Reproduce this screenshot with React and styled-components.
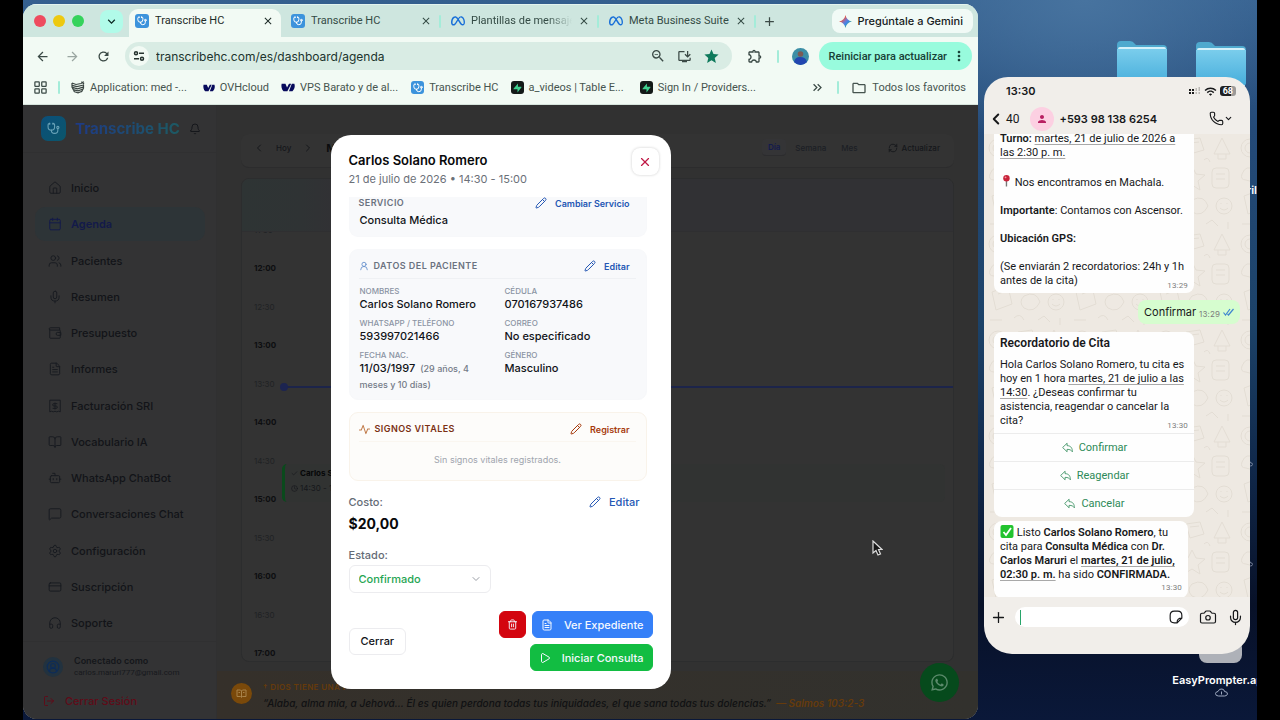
import React from "react";
import styled, { createGlobalStyle, css } from "styled-components";
import {
  Bell, BookOpen, Bot, Calendar, Camera, ChevronDown, ChevronLeft, ChevronRight,
  CircleUserRound, Clock, CreditCard, FileText, Headphones, House, LayoutGrid, LogOut,
  MessageSquare, Mic, Pencil, Phone, Play, Plus, RefreshCw, Settings,
  Stethoscope, Trash2, UserRound, Users, X, Check,
} from "lucide-react";
import {
  MdArrowBack, MdArrowForward, MdClose, MdKeyboardArrowDown, MdKeyboardDoubleArrowRight,
  MdMoreVert, MdOutlineExtension, MdOutlineFolder, MdOutlineInstallDesktop, MdRefresh,
  MdStar, MdZoomOut, MdAdd, MdPerson, MdWifi,
} from "react-icons/md";
import { IoArrowUndoOutline } from "react-icons/io5";
import { FaMeta, FaWhatsapp } from "react-icons/fa6";

const GlobalStyle = createGlobalStyle`
  *, *::before, *::after { box-sizing: border-box; }
  body { margin: 0; background: #000; font-family: Inter, "Liberation Sans", sans-serif; font-size: 11px; }
  button, input, select { font: inherit; color: inherit; margin: 0; padding: 0; border: 0; background: none; }
  button { cursor: pointer; }
  a { color: inherit; text-decoration: none; }
  h1, h2, h3, p, dl, dd, ul { margin: 0; padding: 0; }
  ul { list-style: none; }
  svg { display: block; flex: none; }
`;

/* ---------- Desktop ---------- */
const Screen = styled.div`
  min-height: 100vh;
  padding: 0 23px;
  display: flex;
`;
const Desktop = styled.main`
  position: relative;
  flex: 1;
  min-width: 0;
  height: 100vh;
  min-height: 700px;
  display: flex;
  align-items: flex-start;
  gap: 6px;
  padding: 4px 7px 0 0;
  overflow: hidden;
  background:
    radial-gradient(ellipse 240px 150px at 86% 0, #47739f 0%, transparent 100%),
    linear-gradient(180deg, #35608f 0, #244a78 18%, #1c4268 45%, #10284a 65%, #081128 84%, #0a1839 100%);
`;
const DesktopItem = styled.div`
  position: absolute;
  right: ${(p) => p.$right}px;
  top: ${(p) => p.$top}px;
`;
const FileLabel = styled.div`
  position: absolute;
  right: ${(p) => p.$right}px;
  top: ${(p) => p.$top}px;
  display: grid;
  justify-items: center;
  gap: 1px;
  color: #fff;
  font-size: 11px;
  line-height: 14px;
  font-weight: 600;
  white-space: nowrap;
`;

/* ---------- Browser window ---------- */
const Browser = styled.section`
  flex: 1;
  min-width: 0;
  height: calc(100% - 1px);
  display: flex;
  flex-direction: column;
  border-radius: 14px;
  overflow: hidden;
  background: #f2faf4;
  color: #2f3f3a;
  font-family: Roboto, Inter, sans-serif;
`;
const TabStrip = styled.div`
  height: 33px;
  display: flex;
  align-items: center;
  padding: 0 5px 0 11px;
  background: #cee6df;
  border-top: 1px solid #e3f3ee;
`;
const Lights = styled.div`
  display: flex;
  gap: 7px;
`;
const Light = styled.i`
  width: 12px;
  height: 12px;
  border-radius: 50%;
  background: ${(p) => p.$color};
`;
const TabMenu = styled.button`
  width: 23px;
  height: 23px;
  margin: 0 6px 0 16px;
  display: grid;
  place-items: center;
  border-radius: 8px;
  background: #b1fbe9;
  color: #0c2b24;
`;
const Tab = styled.button`
  width: ${(p) => p.$width}px;
  align-self: flex-end;
  height: 28px;
  display: flex;
  align-items: center;
  gap: 6px;
  padding: 0 7px 5px ${(p) => (p.$active ? 6 : 10)}px;
  text-align: left;
  color: #344b45;
  border-radius: 9px 9px 0 0;
  ${(p) => p.$active && css`background: #f2faf4; color: #1d2b27;`}
`;
const TabTitle = styled.span`
  flex: 1;
  min-width: 0;
  overflow: hidden;
  white-space: nowrap;
  ${(p) => p.$fade && css`mask-image: linear-gradient(90deg, #000 75%, transparent 100%);`}
`;
const Divider = styled.i`
  width: 2px;
  height: 13px;
  flex: none;
  margin: 0 ${(p) => p.$space || 0}px;
  border-radius: 1px;
  background: #a4ecd9;
`;
const GeminiButton = styled.button`
  height: 24px;
  margin-left: auto;
  display: flex;
  align-items: center;
  gap: 5px;
  padding: 0 10px 0 7px;
  border-radius: 8px;
  background: #f1faf6;
  color: #15201d;
  font-family: Inter, sans-serif;
  font-weight: 500;
`;
const Toolbar = styled.div`
  height: 36px;
  display: flex;
  align-items: center;
  padding: 2px 6px 0 11px;
`;
const IconButton = styled.button`
  width: ${(p) => p.$w || 30}px;
  height: 24px;
  flex: none;
  display: grid;
  place-items: center;
  color: ${(p) => p.$color || "#3b4a46"};
`;
const Address = styled.div`
  flex: 1;
  min-width: 0;
  height: 28px;
  margin: 0 9px 0 13px;
  padding: 0 10px 0 4px;
  display: flex;
  align-items: center;
  gap: 7px;
  border-radius: 14px;
  background: #d9ece4;
  input { flex: 1; min-width: 0; font-family: Inter, sans-serif; font-size: 12px; color: #20332d; outline: 0; }
`;
const SiteInfo = styled.button`
  width: 20px;
  height: 20px;
  display: grid;
  place-items: center;
  border-radius: 50%;
  background: #f2faf4;
`;
const Avatar = styled.svg`
  margin: 0 10px 0 5px;
`;
const UpdateButton = styled.button`
  height: 28px;
  display: flex;
  align-items: center;
  gap: 4px;
  padding: 0 5px 0 10px;
  border-radius: 14px;
  background: #98fbdd;
  color: #174036;
  font-weight: 500;
`;
const Bookmarks = styled.nav`
  height: 32px;
  display: flex;
  align-items: center;
  padding: 0 12px 2px 10px;
  border-bottom: 1px solid #d6e4dc;
  white-space: nowrap;
`;
const Bookmark = styled.a`
  display: flex;
  align-items: center;
  gap: 5px;
  margin-left: ${(p) => p.$gap}px;
  color: #46544f;
`;
const Spacer = styled.i`
  flex: 1;
`;
const AppIcon = styled.span`
  width: ${(p) => p.$size || 13}px;
  height: ${(p) => p.$size || 13}px;
  display: grid;
  place-items: center;
  flex: none;
  border-radius: 3px;
  background: ${(p) => p.$bg || "#3c93dc"};
  color: #fff;
`;

/* ---------- Dimmed application page ---------- */
const Page = styled.div`
  position: relative;
  flex: 1;
  min-height: 0;
  display: flex;
  background: #313131;
  color: #15171b;
  font-family: Inter, "Liberation Sans", sans-serif;
`;
const Sidebar = styled.aside`
  width: 194px;
  display: flex;
  flex-direction: column;
  background: #333334;
  border-right: 1px solid #303031;
`;
const Brand = styled.div`
  height: 48px;
  display: flex;
  align-items: center;
  gap: 9px;
  padding: 0 0 0 18px;
  border-bottom: 1px solid #303031;
`;
const BrandMark = styled.span`
  width: 25px;
  height: 25px;
  display: grid;
  place-items: center;
  border-radius: 7px;
  background: linear-gradient(135deg, #0b4f7a, #0b566b);
  color: #6aa3b8;
`;
const BrandName = styled.h1`
  font-size: 15px;
  line-height: 20px;
  font-weight: 700;
  background: linear-gradient(90deg, #1e3a86, #1d5a63);
  background-clip: text;
  color: transparent;
`;
const Nav = styled.nav`
  flex: 1;
  display: flex;
  flex-direction: column;
  justify-content: space-between;
  padding: 18px 11px 1px 12px;
`;
const NavItem = styled.a`
  height: 34px;
  display: flex;
  align-items: center;
  gap: 9px;
  padding: 0 13px;
  border-radius: 10px;
  font-size: 11px;
  font-weight: 500;
  color: #121418;
  svg { color: #181b20; }
  ${(p) => p.$active && css`
    background: #2d3437;
    color: #131a4a;
    font-weight: 600;
    svg { color: #131a4a; }
  `}
`;
const Account = styled.div`
  height: 78px;
  padding: 10px 0 0 20px;
  border-top: 1px solid #303031;
`;
const AccountUser = styled.div`
  display: flex;
  align-items: center;
  gap: 11px;
  height: 30px;
  line-height: 12px;
  strong { display: block; font-size: 9px; font-weight: 600; }
  small { display: block; font-family: Roboto, sans-serif; font-size: 8px; color: #17191d; }
`;
const AccountIcon = styled.span`
  width: 20px;
  height: 20px;
  display: grid;
  place-items: center;
  border-radius: 50%;
  background: #22323f;
  color: #0d2c58;
`;
const Logout = styled.button`
  margin-top: 12px;
  display: flex;
  align-items: center;
  gap: 10px;
  font-size: 11px;
  font-weight: 500;
  color: #600b18;
`;
const Main = styled.div`
  flex: 1;
  min-width: 0;
  display: flex;
  flex-direction: column;
`;
const CalendarBar = styled.div`
  height: 34px;
  margin: 29px 24px 10px;
  display: flex;
  align-items: center;
  padding: 0 10px 6px 12px;
  background: #333;
  border-bottom: 1px solid #2c2c2d;
  border-radius: 8px;
  font-size: 8px;
  font-weight: 500;
  button { display: flex; align-items: center; }
`;
const Period = styled.div`
  display: flex;
  align-items: center;
  gap: 11px;
`;
const Month = styled.strong`
  margin-left: 12px;
  font-size: 11px;
  font-weight: 700;
  color: #0b0c0e;
`;
const Views = styled.div`
  margin-left: auto;
  display: flex;
  gap: 3px;
  button { height: 17px; padding: 0 6px; color: #1c1f25; }
  button:first-child { color: #131a4d; background: #343436; border-radius: 4px; border-bottom: 1px solid #2c2c2e; font-weight: 600; }
`;
const Refresh = styled.button`
  margin-left: 24px;
  margin-right: 4px;
  gap: 4px;
`;
const Agenda = styled.div`
  flex: 1;
  min-height: 0;
  margin: 0 24px 0;
  display: flex;
  flex-direction: column;
  border: 1px solid #2c2d2e;
  border-radius: 8px;
  overflow: hidden;
  background: #333;
`;
const DayHead = styled.div`
  height: 53px;
  flex: none;
  border-bottom: 1px solid #2f2f31;
  background: linear-gradient(90deg, #2e3434 0, #2f3334 60px, #313134 90px);
`;
const Slots = styled.div`
  flex: 1;
  min-height: 0;
  position: relative;
  overflow: hidden;
`;
const HourList = styled.div`
  margin-top: -60px;
`;
const Hour = styled.div`
  height: 77px;
  display: grid;
  grid-template-rows: 1fr 1fr;
`;
const Slot = styled.div`
  display: flex;
  align-items: center;
  width: 44px;
  padding-left: 12px;
  font-size: 8px;
  font-weight: ${(p) => (p.$half ? 400 : 700)};
  color: ${(p) => (p.$half ? "#202224" : "#0d0e10")};
`;
const NowLine = styled.div`
  position: absolute;
  top: 154px;
  left: 42px;
  right: 0;
  height: 2px;
  background: #1c244a;
  &::before {
    content: "";
    position: absolute;
    left: -4px;
    top: -3px;
    width: 8px;
    height: 8px;
    border-radius: 50%;
    background: #1c2450;
  }
`;
const Appointment = styled.div`
  position: absolute;
  top: 232px;
  left: 40px;
  right: 8px;
  height: 38px;
  padding: 2px 0 0 6px;
  border-left: 3px solid #0a4a1c;
  border-radius: 5px;
  background: #313332;
  font-size: 8px;
  line-height: 15px;
  div { display: flex; align-items: center; gap: 2px; }
  strong { color: #060708; }
`;
const Verse = styled.div`
  height: 48px;
  margin-top: 9px;
  display: flex;
  align-items: center;
  gap: 11px;
  padding: 2px 0 0 14px;
  background: linear-gradient(90deg, #35302a, #32312d);
  white-space: nowrap;
  h3 { font-size: 8px; line-height: 14px; font-weight: 600; letter-spacing: 0.05em; color: #663b0b; }
  p { font-size: 10px; line-height: 18px; font-style: italic; font-weight: 500; color: #101113; }
  cite { margin-left: 2px; font-weight: 600; color: #663b0b; }
`;
const VerseIcon = styled.span`
  width: 21px;
  height: 21px;
  margin-bottom: 5px;
  display: grid;
  place-items: center;
  border-radius: 50%;
  background: #7a490a;
  color: #a8834a;
`;
const ChatFab = styled.button`
  position: absolute;
  right: 19px;
  bottom: 17px;
  width: 39px;
  height: 39px;
  display: grid;
  place-items: center;
  border-radius: 50%;
  background: #064a1c;
  color: #5b8a6b;
`;

/* ---------- Appointment dialog ---------- */
const Overlay = styled.div`
  position: absolute;
  inset: 0;
  display: grid;
  place-items: center;
`;
const Dialog = styled.section`
  width: 340px;
  padding: 16px 18px 18px;
  display: flex;
  flex-direction: column;
  border-radius: 20px;
  background: #fff;
  color: #101318;
`;
const DialogHead = styled.header`
  display: flex;
  align-items: flex-start;
  justify-content: space-between;
  height: 46px;
  h2 { font-size: 13px; line-height: 18px; font-weight: 600; color: #08090b; }
  p { font-size: 11px; line-height: 20px; color: #6b7078; }
`;
const CloseButton = styled.button`
  width: 27px;
  height: 27px;
  margin: -3px -6px 0 0;
  display: grid;
  place-items: center;
  border-radius: 8px;
  background: #fff;
  box-shadow: 0 0 3px rgba(0, 0, 0, 0.2);
  color: #c01845;
`;
const DialogBody = styled.div`
  display: flex;
  flex-direction: column;
  gap: 12px;
  padding-right: 6px;
`;
const Card = styled.section`
  padding: ${(p) => (p.$clipped ? "0 10px 8px" : "8px 10px 7px")};
  border: 1px solid ${(p) => (p.$warm ? "#f9f3ea" : "#f7f8fa")};
  border-radius: ${(p) => (p.$clipped ? "0 0 9px 9px" : "9px")};
  border-top-width: ${(p) => (p.$clipped ? 0 : 1)}px;
  background: ${(p) => (p.$warm ? "#fdfcfa" : "#f8f9fb")};
`;
const CardHead = styled.div`
  display: flex;
  align-items: center;
  gap: 5px;
  height: ${(p) => (p.$clipped ? 12 : 21)}px;
  margin-left: -1px;
  padding-bottom: ${(p) => (p.$clipped ? 0 : 4)}px;
  border-bottom: ${(p) => (p.$clipped ? 0 : 1)}px solid ${(p) => (p.$warm ? "#faf6f0" : "#eff1f4")};
  h3 { font-size: 9px; line-height: 12px; font-weight: 600; letter-spacing: 0.05em; color: ${(p) => (p.$warm ? "#7b3013" : "#6b7280")}; }
`;
const LinkButton = styled.button`
  margin-left: auto;
  margin-right: ${(p) => (p.$large ? 7 : 6)}px;
  display: flex;
  align-items: center;
  gap: 8px;
  font-size: ${(p) => (p.$large ? 11 : 9)}px;
  font-weight: ${(p) => (p.$large ? 500 : 600)};
  color: ${(p) => (p.$warm ? "#a63a0c" : "#2457b4")};
`;
const Service = styled.p`
  margin-top: 3px;
  font-size: 11px;
  line-height: 16px;
  font-weight: 500;
`;
const Fields = styled.dl`
  display: grid;
  grid-template-columns: 1fr 1fr;
  gap: 6px 14px;
  padding-top: 7px;
  dt { font-size: 8px; line-height: 10px; font-weight: 500; color: #8b94a3; }
  dd { font-size: 11px; line-height: 16px; font-weight: 500; }
  small { margin-left: 2px; font-size: 9px; line-height: 10px; font-weight: 500; color: #747b88; }
`;
const Empty = styled.p`
  padding: 10px 0 5px;
  text-align: center;
  font-size: 9px;
  line-height: 16px;
  color: #a0a5ae;
`;
const Cost = styled.div`
  display: flex;
  align-items: flex-start;
  justify-content: space-between;
  color: #646b76;
  font-weight: 500;
  line-height: 18px;
  strong { display: block; font-size: 14px; line-height: 25px; font-weight: 700; color: #08090b; }
`;
const StatusField = styled.div`
  position: relative;
  width: 142px;
  margin-top: -3px;
  label { display: block; line-height: 20px; font-weight: 500; color: #646b76; }
  select {
    width: 100%;
    height: 28px;
    padding: 0 9px;
    appearance: none;
    border: 1px solid #ececef;
    border-radius: 6px;
    background: #fff;
    color: #25a552;
    font-weight: 500;
  }
  svg { position: absolute; right: 9px; bottom: 8px; color: #9a9ea6; pointer-events: none; }
`;
const DialogFoot = styled.footer`
  margin-top: 18px;
  display: flex;
  align-items: center;
  justify-content: space-between;
`;
const Actions = styled.div`
  width: 170px;
  display: flex;
  flex-wrap: wrap;
  justify-content: flex-end;
  gap: 6px;
`;
const Button = styled.button`
  height: 27px;
  display: flex;
  align-items: center;
  justify-content: center;
  gap: 11px;
  padding: 0 ${(p) => p.$pad || 8}px;
  border: 1px solid ${(p) => p.$border || p.$bg};
  border-radius: 6px;
  background: ${(p) => p.$bg};
  color: ${(p) => p.$color || "#f4f8ff"};
  font-weight: 500;
`;

/* ---------- Phone window ---------- */
const PhoneWindow = styled.section`
  width: 266px;
  height: 577px;
  margin-top: 73px;
  display: flex;
  flex-direction: column;
  flex: none;
  border-radius: 24px 24px 28px 28px;
  overflow: hidden;
  background: #f1eeea;
  color: #17181a;
  font-family: Roboto, Inter, sans-serif;
  z-index: 1;
`;
const StatusBar = styled.div`
  height: 28px;
  display: flex;
  align-items: center;
  gap: 3px;
  padding: 0 14px 0 22px;
  strong { flex: 1; font-family: Inter, sans-serif; font-weight: 600; }
`;
const Battery = styled.span`
  height: 10px;
  padding: 0 3px;
  border-radius: 3px;
  background: linear-gradient(90deg, #202020 68%, #9c9a98 68%);
  color: #fff;
  font-size: 9px;
  line-height: 10px;
  font-weight: 700;
`;
const ChatHead = styled.header`
  height: 29px;
  display: flex;
  align-items: center;
  padding: 0 17px 2px 3px;
  h2 { flex: 1; margin-left: 6px; font-family: Inter, sans-serif; font-size: 11px; font-weight: 600; white-space: nowrap; }
`;
const BackButton = styled.button`
  display: flex;
  align-items: center;
  gap: 1px;
  font-size: 12px;
`;
const Contact = styled.span`
  width: 24px;
  height: 24px;
  margin-left: 10px;
  display: grid;
  place-items: center;
  border-radius: 50%;
  background: #fcd0e2;
  color: #b81f62;
`;
const Chat = styled.div`
  position: relative;
  flex: 1;
  min-height: 0;
  padding: 0 10px;
  display: flex;
  flex-direction: column;
  align-items: flex-start;
  background: #eee9e2;
  overflow: hidden;
`;
const Wallpaper = styled.svg`
  position: absolute;
  inset: 0;
  width: 100%;
  height: 100%;
`;
const Bubble = styled.article`
  position: relative;
  width: ${(p) => p.$width}px;
  padding: ${(p) => p.$pad || "4px 6px"};
  margin-top: ${(p) => p.$gap || 0}px;
  align-self: ${(p) => (p.$out ? "flex-end" : "flex-start")};
  border-radius: ${(p) => (p.$top ? "0 0 8px 8px" : "8px")};
  background: ${(p) => (p.$out ? "#d6fdcf" : "#fefefe")};
  font-size: 11px;
  line-height: 14px;
  h3 { font-size: 12px; line-height: 16px; font-weight: 600; margin-bottom: 7px; }
  p + p { margin-top: 14px; }
  p { white-space: nowrap; }
  b { font-weight: 600; }
  u { text-decoration-color: #a9a9a9; text-underline-offset: 2px; }
`;
const Time = styled.time`
  display: block;
  margin-top: ${(p) => p.$up || 0}px;
  text-align: right;
  font-size: 8px;
  line-height: 12px;
  letter-spacing: 0.02em;
  color: #7d7d7d;
`;
const SentRow = styled.div`
  display: flex;
  align-items: center;
  justify-content: space-between;
  font-family: Inter, sans-serif;
`;
const Inline = styled.svg`
  display: inline-block;
  vertical-align: -2px;
`;
const Replies = styled.div`
  margin: 1px -6px 0;
`;
const Reply = styled.button`
  width: 100%;
  height: 28px;
  display: flex;
  align-items: center;
  justify-content: center;
  gap: 5px;
  border-top: 1px solid #ececec;
  color: #2d8a58;
`;
const Composer = styled.footer`
  height: 57px;
  display: flex;
  align-items: flex-start;
  padding: 10px 9px 0 6px;
  gap: 9px;
`;
const MessageBox = styled.div`
  flex: 1;
  min-width: 0;
  height: 20px;
  display: flex;
  align-items: center;
  padding: 0 6px 0 5px;
  border-radius: 10px;
  background: #fff;
  input { flex: 1; min-width: 0; height: 15px; border-left: 1px solid #28a56a; outline: 0; }
`;
const ComposerButton = styled.button`
  height: 20px;
  width: ${(p) => p.$w}px;
  display: grid;
  place-items: center;
  flex: none;
`;
const Pointer = styled.svg`
  position: absolute;
  left: 848px;
  top: 540px;
  z-index: 2;
`;

/* ---------- Drawings ---------- */
const Folder = () => (
  <svg width="50" height="44" viewBox="0 0 50 44">
    <defs><linearGradient id="folder" x1="0" y1="0" x2="0" y2="1"><stop offset="0" stopColor="#7acdec" /><stop offset="1" stopColor="#46addb" /></linearGradient></defs>
    <path d="M0 4Q0 0 4 0H13Q16 0 18 3L19 4H46Q50 4 50 8V40Q50 44 46 44H4Q0 44 0 40Z" fill="#4ea9ce" />
    <path d="M1 8Q1 6 3 6H47Q49 6 49 8V44H1Z" fill="#d4f1fa" />
    <path d="M0 8H50V40Q50 44 46 44H4Q0 44 0 40Z" fill="url(#folder)" />
  </svg>
);
const Cloud = ({ w = 13, h = 9 }) => (
  <svg width={w} height={h} viewBox="0 0 26 18" fill="none" stroke="#9faac0" strokeWidth="2"><path d="M7 16Q1 16 1 11Q2 7 6 7Q8 1 14 2Q19 3 19 7Q25 7 25 12Q24 16 19 16ZM13 7V13" /></svg>
);
const GeminiStar = () => (
  <svg width="13" height="13" viewBox="0 0 24 24">
    <defs><linearGradient id="gem" x1="0" y1="0" x2="1" y2="1"><stop offset=".3" stopColor="#e4574b" /><stop offset=".48" stopColor="#6f78d0" /><stop offset=".6" stopColor="#3e86e8" /><stop offset=".8" stopColor="#3eae6a" /></linearGradient></defs>
    <path d="M12 0C13.500 7 17 10.500 24 12C17 13.500 13.500 17 12 24C10.500 17 7 13.500 0 12C7 10.500 10.500 7 12 0Z" fill="url(#gem)" />
  </svg>
);
const Tune = () => (
  <svg width="12" height="12" viewBox="0 0 12 12" fill="none" stroke="#26332f" strokeWidth="1.5">
    <circle cx="3" cy="3.2" r="1.5" /><path d="M6 3.2H11M1 8.8H6" /><circle cx="9" cy="8.8" r="1.5" />
  </svg>
);
const Nest = () => (
  <svg width="14" height="13" viewBox="0 0 14 13" fill="none" stroke="#3b4643" strokeWidth="1.2">
    <path d="M1 2L5 3.5L10 2.5L13 .8M1 4.3L6 5.6L12.5 4M1.5 6.4L6.5 7.8L12 6.2M2 8.6L7 9.8L11.5 8.3M3.5 10.7L7 11.8L10.5 10.5M1 2V6L3.5 11M12.5 3.5V7L10.5 11M10.5.6L13 3" />
  </svg>
);
const OvhMark = ({ w = 11, h = 8 }) => (
  <svg width={w} height={h} viewBox="0 0 22 14" fill="#070a5c">
    <path d="M1 1H7L9.5 7L12.5 1H16L10 13H4C1 10 0 5 1 1Z" /><path d="M17 1H21C22.500 6 21 10 18 13H12.500Z" />
  </svg>
);
const Bolt = () => (
  <svg width="9" height="10" viewBox="0 0 20 22" fill="#3fd08f">
    <path d="M11 1V8H18Q20 8 18.500 10L10 21V14H2Q0 14 1.500 12Z" />
  </svg>
);
const WalletIcon = () => (
  <svg width="14" height="14" viewBox="0 0 24 24" fill="none" stroke="currentColor" strokeWidth="1.700">
    <path d="M3 5V20Q3 21 4 21H20Q21 21 21 20V8Q21 7 20 7H4Q2 7 2 5Q2 3 4 3H20V7M16 11H22V16H16Q14 16 14 13.500Q14 11 16 11Z" />
  </svg>
);
const InvoiceIcon = () => (
  <svg width="14" height="14" viewBox="0 0 24 24" fill="none" stroke="currentColor" strokeWidth="1.700">
    <path d="M3 2H21V22L18 21L15 22L12 21L9 22L6 21L3 22Z" /><path d="M16 8H10Q8 8 8 10Q8 12 10 12H14Q16 12 16 14Q16 16 14 16H8M12 6V18" />
  </svg>
);
const Pulse = () => (
  <svg width="11" height="11" viewBox="0 0 24 24" fill="none" stroke="#c07b4a" strokeWidth="2.200" strokeLinejoin="round" strokeLinecap="round">
    <path d="M1 13H5L9 3L15 21L19 11H23" />
  </svg>
);
const StickerIcon = () => (
  <svg width="14" height="14" viewBox="0 0 24 24" fill="none" stroke="currentColor" strokeWidth="2" strokeLinejoin="round">
    <path d="M14 22H9Q2 22 2 15V9Q2 2 9 2H15Q22 2 22 9V14ZM14 22Q13 14 22 14" />
  </svg>
);
const Pin = () => (
  <Inline width="12" height="14" viewBox="0 0 13 14"><path d="M7 6V13" stroke="#777" strokeWidth="1.500" /><circle cx="7" cy="4" r="3.500" fill="#c8233a" /><circle cx="6" cy="3" r="1" fill="#f19aa4" /></Inline>
);
const Tick = () => (
  <Inline width="14" height="13" viewBox="0 0 14 13"><rect x=".5" width="13" height="13" rx="2" fill="#22c32f" /><path d="M3.500 7L6 10L11 3" fill="none" stroke="#fff" strokeWidth="1.800" /></Inline>
);
const DoubleTick = () => (
  <svg width="11" height="8" viewBox="0 0 11 8" fill="none" stroke="#3f86cf" strokeWidth="1.200"><path d="M.5 4.500L2.500 7L7 1M4.500 6L5.500 7L10.500 1" /></svg>
);
const Signal = () => (
  <svg width="13" height="10" viewBox="0 0 13 10" fill="#1c1c1c">
    <path d="M1 3H3V5H1ZM1 6H3V8H1ZM4 3H6V5H4ZM4 6H6V8H4Z" /><path d="M7.500 2H9V5H7.500ZM7.500 6H9V8H7.500ZM10.500 1H12V5H10.500ZM10.500 6H12V8H10.500Z" fill="#bbb8b4" />
  </svg>
);
const BookBadge = () => (
  <svg width="11" height="9" viewBox="0 0 22 18" fill="none" stroke="currentColor" strokeWidth="2"><path d="M2 2H9L11 4L13 2H20V15H13L11 17L9 15H2ZM11 4V16M5 7H8M14 7H17" /></svg>
);
const Doodles = () => (
  <Wallpaper aria-hidden="true">
    <defs>
      <pattern id="doodles" width="84" height="96" patternUnits="userSpaceOnUse">
        <g fill="none" stroke="#e3ddd4" strokeWidth="1">
          <circle cx="14" cy="14" r="9" /><circle cx="14" cy="14" r="5" /><path d="M34 6L48 4L52 16L38 20ZM38 9L47 8M62 20L70 4L78 20ZM66 20V25H74V20" />
          <path d="M6 40Q10 30 18 36Q28 34 26 44Q20 50 10 46Q4 46 6 40ZM40 32L44 40L53 41L46 47L48 56L40 51L32 56L34 47L27 41L36 40Z" />
          <rect x="60" y="34" width="17" height="20" rx="4" /><path d="M64 40H73M64 45H73M8 62L24 56L28 74L12 80ZM14 64L22 61M40 66Q52 60 56 72Q50 84 40 78Q34 72 40 66Z" />
          <circle cx="72" cy="72" r="8" /><path d="M68 74Q72 78 76 74M69 69V70M75 69V70M6 90H18M30 88Q36 82 40 90M54 90L60 86L66 92M76 88V95M52 26Q56 22 58 28" />
        </g>
      </pattern>
    </defs>
    <rect width="100%" height="100%" fill="url(#doodles)" />
  </Wallpaper>
);

const NAV = [
  ["Inicio", House], ["Agenda", Calendar], ["Pacientes", Users], ["Resumen", Mic],
  ["Presupuesto", WalletIcon], ["Informes", FileText], ["Facturación SRI", InvoiceIcon],
  ["Vocabulario IA", BookOpen], ["WhatsApp ChatBot", Bot], ["Conversaciones Chat", MessageSquare],
  ["Configuración", Settings], ["Suscripción", CreditCard], ["Soporte", Headphones],
];
const HOURS = [11, 12, 13, 14, 15, 16, 17];
const PATIENT = [
  ["NOMBRES", "Carlos Solano Romero"], ["CÉDULA", "070167937486"],
  ["WHATSAPP / TELÉFONO", "593997021466"], ["CORREO", "No especificado"],
  ["FECHA NAC.", "11/03/1997", "(29 años, 4 meses y 10 días)"], ["GÉNERO", "Masculino"],
];

const HcIcon = ({ size }) => <AppIcon $size={size}><Stethoscope size={10} strokeWidth={2.4} /></AppIcon>;

function BrowserTab({ icon, title, active, width, fade }) {
  return (
    <Tab $active={active} $width={width}>
      {icon}<TabTitle $fade={fade}>{title}</TabTitle><MdClose size={12} />
    </Tab>
  );
}

function BrowserChrome() {
  return (
    <>
      <TabStrip>
        <Lights><Light $color="#ee4b5f" /><Light $color="#edc90f" /><Light $color="#35d35c" /></Lights>
        <TabMenu aria-label="Buscar pestañas"><MdKeyboardArrowDown size={15} /></TabMenu>
        <BrowserTab active width={152} icon={<HcIcon size={14} />} title="Transcribe HC" />
        <BrowserTab width={158} icon={<HcIcon size={14} />} title="Transcribe HC" />
        <Divider />
        <BrowserTab fade width={156} icon={<FaMeta size={14} color="#1a70d8" />} title="Plantillas de mensajes" />
        <Divider />
        <BrowserTab width={155} icon={<FaMeta size={14} color="#1a70d8" />} title="Meta Business Suite" />
        <Divider />
        <IconButton aria-label="Nueva pestaña" $w={26}><MdAdd size={15} /></IconButton>
        <GeminiButton><GeminiStar />Pregúntale a Gemini</GeminiButton>
      </TabStrip>
      <Toolbar>
        <IconButton aria-label="Atrás" $w={16}><MdArrowBack size={15} /></IconButton>
        <IconButton aria-label="Adelante" $w={44} $color="#9aa6a1"><MdArrowForward size={15} /></IconButton>
        <IconButton aria-label="Recargar" $w={18}><MdRefresh size={15} /></IconButton>
        <Address>
          <SiteInfo aria-label="Información del sitio"><Tune /></SiteInfo>
          <input aria-label="Dirección" defaultValue="transcribehc.com/es/dashboard/agenda" />
          <IconButton aria-label="Zoom" $w={20}><MdZoomOut size={16} /></IconButton>
          <IconButton aria-label="Instalar" $w={20}><MdOutlineInstallDesktop size={15} /></IconButton>
          <IconButton aria-label="Favorito" $w={20} $color="#0f7a5c"><MdStar size={17} /></IconButton>
        </Address>
        <IconButton aria-label="Extensiones" $w={28}><MdOutlineExtension size={16} /></IconButton>
        <Divider $space={8} />
        <Avatar width="17" height="17" viewBox="0 0 17 17">
          <circle cx="8.500" cy="8.500" r="8.500" fill="#3d8fa6" /><path d="M2 14Q3 9 8 9Q14 9 15 14Q12 17 8.500 17Q5 17 2 14Z" fill="#2246b0" /><circle cx="8.500" cy="6" r="2.800" fill="#7b5a55" />
        </Avatar>
        <UpdateButton>Reiniciar para actualizar<MdMoreVert size={16} /></UpdateButton>
      </Toolbar>
      <Bookmarks>
        <IconButton aria-label="Aplicaciones" $w={14}><LayoutGrid size={15} /></IconButton>
        <Divider $space={11} />
        <Bookmark href="#" $gap={0}><Nest />Application: med -...</Bookmark>
        <Bookmark href="#" $gap={16}><OvhMark w={12} />OVHcloud</Bookmark>
        <Bookmark href="#" $gap={12}><OvhMark w={14} h={9} />VPS Barato y de al...</Bookmark>
        <Bookmark href="#" $gap={13}><HcIcon />Transcribe HC</Bookmark>
        <Bookmark href="#" $gap={12}><AppIcon $bg="#131918"><Bolt /></AppIcon>a_videos | Table E...</Bookmark>
        <Bookmark href="#" $gap={16}><AppIcon $bg="#131918"><Bolt /></AppIcon>Sign In / Providers...</Bookmark>
        <Spacer />
        <IconButton aria-label="Más favoritos" $w={16}><MdKeyboardDoubleArrowRight size={15} /></IconButton>
        <Divider $space={12} />
        <Bookmark href="#" $gap={0}><MdOutlineFolder size={16} />Todos los favoritos</Bookmark>
      </Bookmarks>
    </>
  );
}

function AppSidebar() {
  return (
    <Sidebar>
      <Brand>
        <BrandMark><Stethoscope size={13} /></BrandMark>
        <BrandName>Transcribe HC</BrandName>
        <Bell size={12} />
      </Brand>
      <Nav>
        {NAV.map(([name, Icon]) => (
          <NavItem href="#" key={name} $active={name === "Agenda"}><Icon size={14} strokeWidth={1.7} />{name}</NavItem>
        ))}
      </Nav>
      <Account>
        <AccountUser>
          <AccountIcon><CircleUserRound size={14} /></AccountIcon>
          <div><strong>Conectado como</strong><small>carlos.maruri777@gmail.com</small></div>
        </AccountUser>
        <Logout><LogOut size={12} />Cerrar Sesión</Logout>
      </Account>
    </Sidebar>
  );
}

function AgendaView() {
  return (
    <Main>
      <CalendarBar>
        <Period>
          <button aria-label="Día anterior"><ChevronLeft size={12} /></button>
          <button>Hoy</button>
          <button aria-label="Día siguiente"><ChevronRight size={12} /></button>
        </Period>
        <Month>M</Month>
        <Views><button>Día</button><button>Semana</button><button>Mes</button></Views>
        <Refresh><RefreshCw size={10} />Actualizar</Refresh>
      </CalendarBar>
      <Agenda>
        <DayHead />
        <Slots>
          <HourList>
            {HOURS.map((h) => (
              <Hour key={h}><Slot>{h}:00</Slot><Slot $half>{h}:30</Slot></Hour>
            ))}
          </HourList>
          <NowLine />
          <Appointment>
            <div><Check size={7} /><strong>Carlos S</strong></div>
            <div><Clock size={7} />14:30 - 15</div>
          </Appointment>
        </Slots>
      </Agenda>
      <Verse>
        <VerseIcon><BookBadge /></VerseIcon>
        <div>
          <h3>† DIOS TIENE UNA P</h3>
          <p>“Alaba, alma mía, a Jehová... Él es quien perdona todas tus iniquidades, el que sana todas tus dolencias.” <cite>— Salmos 103:2-3</cite></p>
        </div>
      </Verse>
      <ChatFab aria-label="WhatsApp"><FaWhatsapp size={19} /></ChatFab>
    </Main>
  );
}

function AppointmentDialog() {
  return (
    <Overlay>
      <Dialog role="dialog" aria-labelledby="dialog-title">
        <DialogHead>
          <div>
            <h2 id="dialog-title">Carlos Solano Romero</h2>
            <p>21 de julio de 2026 • 14:30 - 15:00</p>
          </div>
          <CloseButton aria-label="Cerrar ventana"><X size={14} /></CloseButton>
        </DialogHead>
        <DialogBody>
          <Card $clipped>
            <CardHead $clipped>
              <h3>SERVICIO</h3>
              <LinkButton><Pencil size={12} />Cambiar Servicio</LinkButton>
            </CardHead>
            <Service>Consulta Médica</Service>
          </Card>
          <Card>
            <CardHead>
              <UserRound size={10} color="#5f8ccb" />
              <h3>DATOS DEL PACIENTE</h3>
              <LinkButton><Pencil size={12} />Editar</LinkButton>
            </CardHead>
            <Fields>
              {PATIENT.map(([label, value, note]) => (
                <div key={label}><dt>{label}</dt><dd>{value} {note && <small>{note}</small>}</dd></div>
              ))}
            </Fields>
          </Card>
          <Card $warm>
            <CardHead $warm>
              <Pulse />
              <h3>SIGNOS VITALES</h3>
              <LinkButton $warm><Pencil size={12} />Registrar</LinkButton>
            </CardHead>
            <Empty>Sin signos vitales registrados.</Empty>
          </Card>
          <Cost>
            <div>Costo:<strong>$20,00</strong></div>
            <LinkButton $large><Pencil size={12} />Editar</LinkButton>
          </Cost>
          <StatusField>
            <label htmlFor="status">Estado:</label>
            <select id="status" defaultValue="Confirmado"><option>Confirmado</option></select>
            <ChevronDown size={12} />
          </StatusField>
        </DialogBody>
        <DialogFoot>
          <Button $pad={11} $bg="#fff" $border="#ececef" $color="#111318">Cerrar</Button>
          <Actions>
            <Button $pad={7} $bg="#d3050f" aria-label="Eliminar"><Trash2 size={11} /></Button>
            <Button $bg="#3580f8"><FileText size={12} />Ver Expediente</Button>
            <Button $bg="#12bd42"><Play size={12} />Iniciar Consulta</Button>
          </Actions>
        </DialogFoot>
      </Dialog>
    </Overlay>
  );
}

function PhoneApp() {
  return (
    <PhoneWindow>
      <StatusBar><strong>13:30</strong><Signal /><MdWifi size={13} /><Battery>68</Battery></StatusBar>
      <ChatHead>
        <BackButton><ChevronLeft size={18} strokeWidth={2.6} />40</BackButton>
        <Contact><MdPerson size={12} /></Contact>
        <h2>+593 98 138 6254</h2>
        <Phone size={15} strokeWidth={1.8} /><ChevronDown size={9} strokeWidth={3} />
      </ChatHead>
      <Chat>
        <Doodles />
        <Bubble $top $width={200} $gap={-2} $pad="0 6px 1px">
          <p><b>Turno:</b> <u>martes, 21 de julio de 2026 a</u><br /><u>las 2:30 p. m.</u></p>
          <p><Pin /> Nos encontramos en Machala.</p>
          <p><b>Importante</b>: Contamos con Ascensor.</p>
          <p><b>Ubicación GPS:</b></p>
          <p>(Se enviarán 2 recordatorios: 24h y 1h<br />antes de la cita)</p>
          <Time $up={-8}>13:29</Time>
        </Bubble>
        <Bubble $out $width={102} $gap={7}>
          <SentRow>Confirmar<Time $up={4}>13:29</Time><DoubleTick /></SentRow>
        </Bubble>
        <Bubble $width={200} $gap={8} $pad="3px 6px 0">
          <h3>Recordatorio de Cita</h3>
          <p>Hola Carlos Solano Romero, tu cita es<br />hoy en 1 hora <u>martes, 21 de julio a las</u><br /><u>14:30</u>. ¿Deseas confirmar tu<br />asistencia, reagendar o cancelar la<br />cita?</p>
          <Time $up={-8}>13:30</Time>
          <Replies>
            {["Confirmar", "Reagendar", "Cancelar"].map((r) => (
              <Reply key={r}><IoArrowUndoOutline size={13} />{r}</Reply>
            ))}
          </Replies>
        </Bubble>
        <Bubble $width={194} $gap={4}>
          <p><Tick /> Listo <b>Carlos Solano Romero</b>, tu<br />cita para <b>Consulta Médica</b> con <b>Dr.</b><br /><b>Carlos Maruri</b> el <b><u>martes, 21 de julio,</u></b><br /><b><u>02:30 p. m.</u></b> ha sido <b>CONFIRMADA.</b></p>
          <Time>13:30</Time>
        </Bubble>
      </Chat>
      <Composer>
        <ComposerButton $w={16} aria-label="Adjuntar"><Plus size={17} strokeWidth={1.8} /></ComposerButton>
        <MessageBox><input aria-label="Mensaje" /><StickerIcon /></MessageBox>
        <ComposerButton $w={20} aria-label="Cámara"><Camera size={18} strokeWidth={1.6} /></ComposerButton>
        <ComposerButton $w={14} aria-label="Grabar"><Mic size={17} strokeWidth={1.7} /></ComposerButton>
      </Composer>
    </PhoneWindow>
  );
}

export default function App() {
  return (
    <Screen>
      <GlobalStyle />
      <Desktop>
        <DesktopItem $right={90} $top={41}><Folder /></DesktopItem>
        <DesktopItem $right={11} $top={42}><Folder /></DesktopItem>
        <DesktopItem $right={15} $top={640}>
          <svg width="43" height="23"><rect width="43" height="23" rx="8" fill="#aeb1b8" /></svg>
        </DesktopItem>
        <DesktopItem $right={4} $top={460}><Cloud w={9} h={7} /></DesktopItem>
        <DesktopItem $right={4} $top={560}><Cloud w={9} h={7} /></DesktopItem>
        <FileLabel $right={0} $top={183}>ril</FileLabel>
        <FileLabel $right={-13} $top={673}>EasyPrompter.app<Cloud /></FileLabel>
        <Browser>
          <BrowserChrome />
          <Page>
            <AppSidebar />
            <AgendaView />
            <AppointmentDialog />
          </Page>
        </Browser>
        <PhoneApp />
        <Pointer width="12" height="17" viewBox="0 0 12 17"><path d="M2 1V13L5 10.500L7 15L9.500 14L7.500 9.500H11Z" fill="#161616" stroke="#dcdcdc" strokeWidth="1.200" /></Pointer>
      </Desktop>
    </Screen>
  );
}
